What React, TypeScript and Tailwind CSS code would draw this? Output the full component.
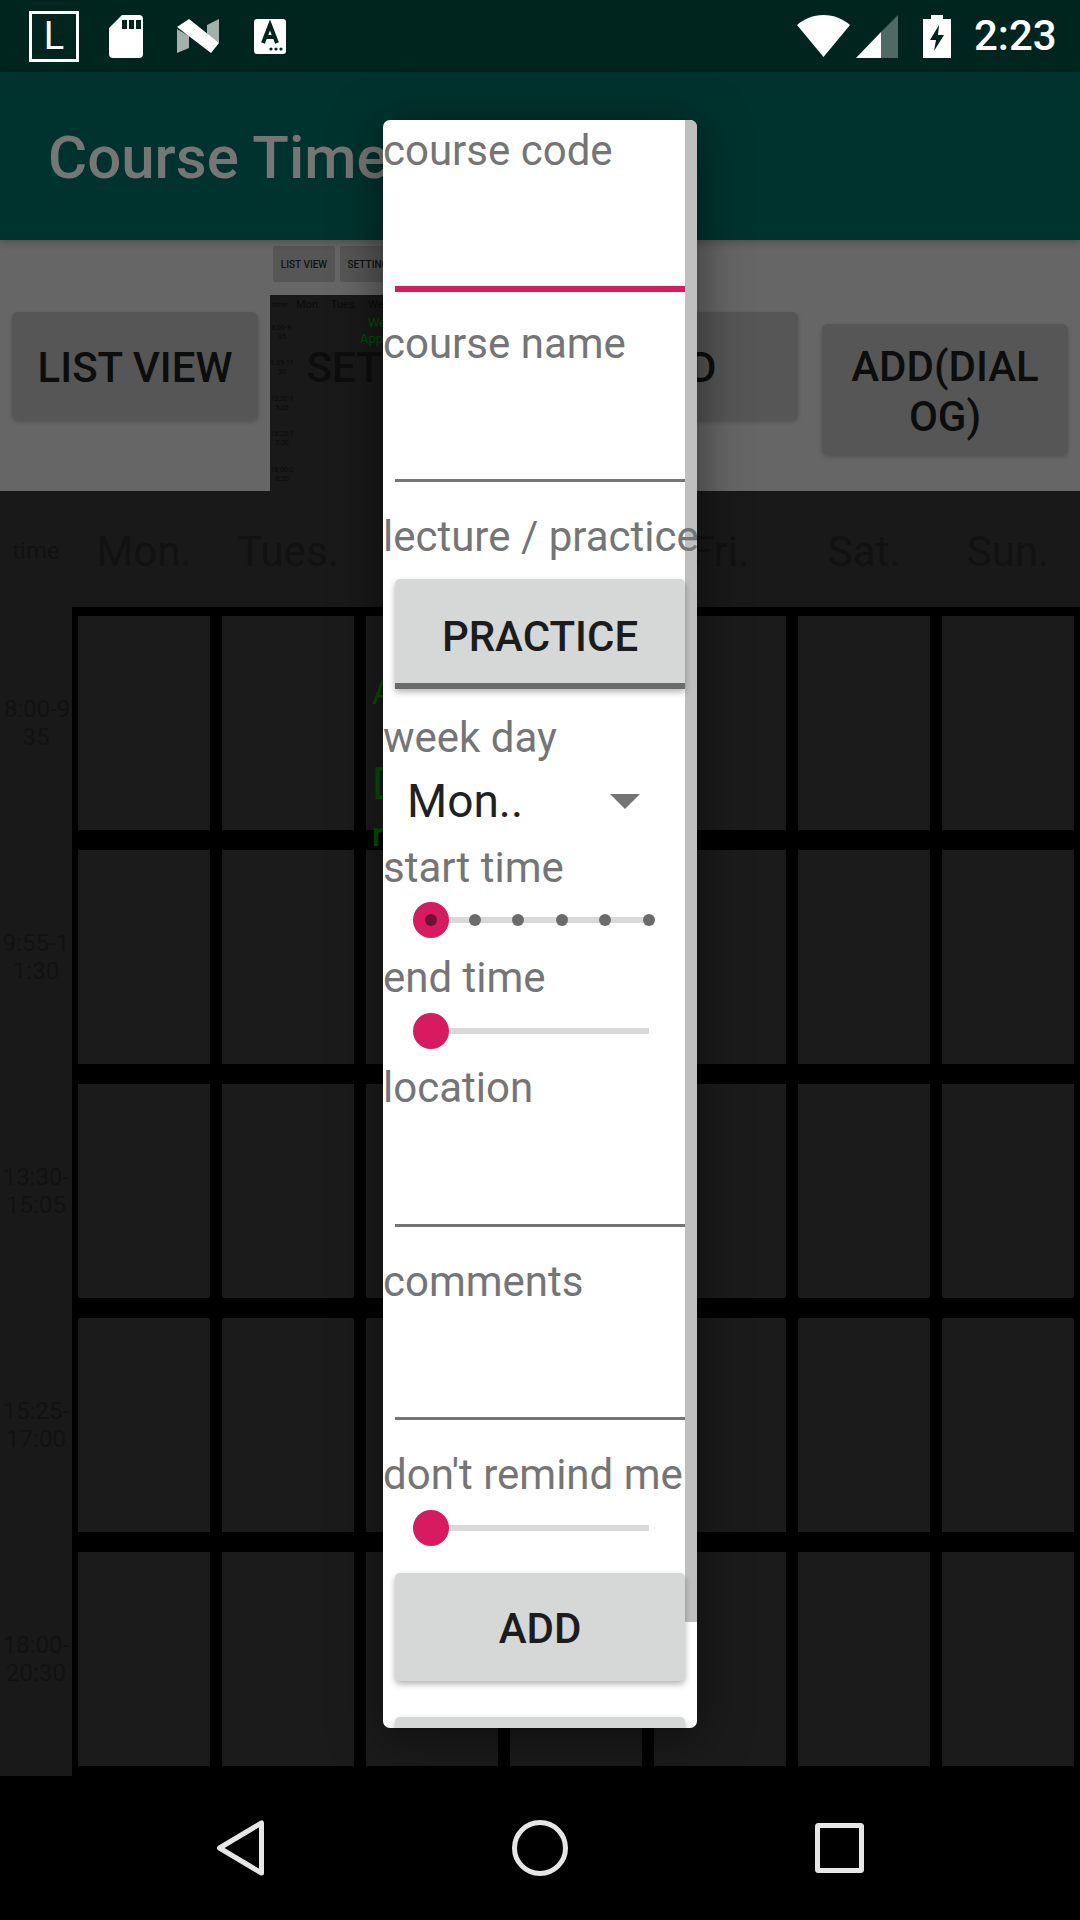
const times = [
  ['8:00-9:', '35'],
  ['9:55-1', '1:30'],
  ['13:30-', '15:05'],
  ['15:25-', '17:00'],
  ['18:00-', '20:30'],
];
const miniTimes = [
  ['8:00-9:', '35'],
  ['9:55-11', '30'],
  ['13:30-1', '5:05'],
  ['15:25-1', '7:00'],
  ['18:00-2', '0:30'],
];
const days = ['Mon.', 'Tues.', 'Wed.', 'Thur.', 'Fri.', 'Sat.', 'Sun.'];

function StatusBar() {
  return (
    <div className="h-[72px] bg-[#00251f] flex items-center text-white shrink-0">
      <div className="ml-[29px] w-[50px] h-[51px] border-[3px] border-white flex items-center justify-center text-[38px] leading-none">L</div>
      <svg className="ml-[30px]" width="34" height="43" viewBox="0 0 34 43">
        <path fill="#fff" fillRule="evenodd" d="M13 0h17a4 4 0 0 1 4 4v35a4 4 0 0 1-4 4H4a4 4 0 0 1-4-4V13zM13 5v9h5V5zM20 5v9h5V5zM27 5v9h5V5z" />
      </svg>
      <svg className="ml-[34px]" width="42" height="34" viewBox="0 0 42 34">
        <path fill="#a5b0ad" d="M0 10l12 7v12L0 34zM42 0v24l-12-7V6z" />
        <path fill="#fff" d="M12 0l30 24-8 10L0 8z" />
      </svg>
      <svg className="ml-[35px]" width="32" height="35" viewBox="0 0 32 35">
        <rect width="32" height="35" rx="3" fill="#fff" />
        <path fill="none" stroke="#00251f" strokeWidth="4" d="M9 24L16 6l7 18M11 18h10" />
        <circle cx="17" cy="30" r="1.6" fill="#00251f" />
        <circle cx="22" cy="30" r="1.6" fill="#00251f" />
        <circle cx="27" cy="30" r="1.6" fill="#00251f" />
      </svg>
      <svg className="ml-[511px]" width="53" height="42" viewBox="0 0 53 42">
        <path fill="#fff" d="M26.5 42L0 10C7 4 16 0 26.5 0S46 4 53 10z" />
      </svg>
      <svg className="ml-[6px]" width="42" height="43" viewBox="0 0 42 43">
        <path fill="#4f6a64" d="M42 0v43H25V17z" />
        <path fill="#fff" d="M25 17v26H0z" />
      </svg>
      <svg className="ml-[25px]" width="28" height="43" viewBox="0 0 28 43">
        <path fill="#fff" fillRule="evenodd" d="M8 0h12v4h8v39H0V4h8zM16 10L7 25h6l-2 11 10-16h-6z" />
      </svg>
      <div className="ml-[23px] text-[42px] leading-none font-medium">2:23</div>
    </div>
  );
}

function MiniPreview() {
  return (
    <>
      <div className="absolute left-[273px] top-[6px] flex gap-[5px] z-0">
        <div className="w-[62px] h-[36px] bg-[#565656] rounded-[2px] flex items-center justify-center text-[10px] font-medium text-[#111] whitespace-nowrap">LIST VIEW</div>
        <div className="w-[62px] h-[36px] bg-[#565656] rounded-[2px] flex items-center justify-center text-[10px] font-medium text-[#111] whitespace-nowrap">SETTINGS</div>
      </div>
      <div className="absolute left-[270px] top-[55px] w-[300px] h-[196px] bg-[#191919] z-0 text-[#0b0b0b] overflow-hidden">
        <div className="flex items-center h-[20px] text-[11px] pl-[2px]">
          <span className="w-[24px] text-[8px]">time</span>
          <span className="w-[35px]">Mon.</span>
          <span className="w-[37px]">Tues.</span>
          <span>Wed.</span>
        </div>
        <div className="absolute left-[98px] top-[20px] text-[13px] leading-[16px] text-[#004d00]">Wel</div>
        <div className="absolute left-[90px] top-[36px] text-[13px] leading-[16px] text-[#004d00]">Applic</div>
        <div className="w-[24px] flex flex-col items-center">
          {miniTimes.map((t) => (
            <div key={t[0]} className="h-[35.5px] flex flex-col justify-center text-center text-[7px] leading-[9px] whitespace-nowrap">
              <span>{t[0]}</span>
              <span>{t[1]}</span>
            </div>
          ))}
        </div>
      </div>
    </>
  );
}

function ButtonStrip() {
  const btn = 'relative z-10 shrink-0 w-[246px] rounded-[6px] flex items-center justify-center text-center text-[42px] leading-[50px] font-medium text-[#0d0d0d]';
  return (
    <div className="relative h-[251px] bg-[#666666] flex items-start gap-[24px] pl-[12px] shrink-0">
      <MiniPreview />
      <div className={`${btn} mt-[72px] h-[108px] pt-[4px] bg-[#565656] shadow-[0_2px_4px_rgba(0,0,0,0.2)]`}>LIST VIEW</div>
      <div className={`${btn} mt-[72px] h-[108px] pt-[4px]`}>SETTINGS</div>
      <div className={`${btn} mt-[72px] h-[108px] pt-[4px] bg-[#565656] shadow-[0_2px_4px_rgba(0,0,0,0.2)]`}>ADD</div>
      <div className={`${btn} mt-[84px] h-[131px] pt-[5px] bg-[#565656] shadow-[0_2px_4px_rgba(0,0,0,0.2)]`}>
        ADD(DIAL<br />OG)
      </div>
    </div>
  );
}

function Timetable() {
  return (
    <div className="h-[1285px] bg-[#191919] shrink-0 overflow-hidden">
      <div className="h-[116px] flex items-start pt-[39px] text-[#121212]">
        <div className="w-[72px] text-center text-[24px] leading-[42px]">time</div>
        <div className="grid grid-cols-[repeat(7,132px)] gap-x-[12px] px-[6px] text-[42px] leading-[44px]">
          {days.map((d) => (
            <div key={d} className="text-center whitespace-nowrap">{d}</div>
          ))}
        </div>
      </div>
      <div className="flex h-[1169px]">
        <div className="w-[72px] overflow-hidden grid grid-cols-[72px] grid-rows-[repeat(5,214.4px)] gap-y-[19.5px] pt-[9px] pb-[10px] text-[#121212] text-[24px] leading-[28px]">
          {times.map((t, i) => (
            <div key={t[0]} className="flex flex-col items-center justify-center whitespace-nowrap">
              <span className={i === 0 ? 'ml-[8px]' : ''}>{t[0]}</span>
              <span>{t[1]}</span>
            </div>
          ))}
        </div>
        <div className="flex-1 bg-black grid grid-cols-[repeat(7,132px)] grid-rows-[repeat(5,214.4px)] gap-x-[12px] gap-y-[19.5px] px-[6px] pt-[9px] pb-[10px]">
          {Array.from({ length: 35 }).map((_, i) => (
            <div key={i} className="bg-[#1b1b1b] text-[#005400]">
              {i === 2 && (
                <div className="pl-[6px] pt-[56px]">
                  <div className="text-[34px] leading-[40px] h-[92px]">A</div>
                  <div className="text-[44px] leading-[40px] h-[50px]">D</div>
                  <div className="text-[34px] leading-[40px] font-medium">r</div>
                </div>
              )}
            </div>
          ))}
        </div>
      </div>
    </div>
  );
}

function NavBar() {
  return (
    <div className="h-[144px] bg-black flex items-start justify-center gap-[240px] pt-[44px] shrink-0">
      <svg width="60" height="56" viewBox="0 0 60 56" fill="none" stroke="#e6e6e6" strokeWidth="5" strokeLinejoin="round">
        <path d="M51.5 3v50L9.5 28z" />
      </svg>
      <svg width="60" height="56" viewBox="0 0 60 56" fill="none" stroke="#e6e6e6" strokeWidth="5">
        <circle cx="30" cy="28" r="25.5" />
      </svg>
      <svg width="60" height="56" viewBox="0 0 60 56" fill="none" stroke="#e6e6e6" strokeWidth="5" strokeLinejoin="round">
        <rect x="7.5" y="5.5" width="44" height="45" rx="1" />
      </svg>
    </div>
  );
}

function Label({ children, leading = 'leading-[62px]' }: { children: string; leading?: string }) {
  return <div className={`h-[47px] text-[42px] text-[#757575] whitespace-nowrap ${leading}`}>{children}</div>;
}

function Slider({ ticks, top }: { ticks?: boolean; top: string }) {
  return (
    <div className={`${top} pl-[48px]`}>
      <div className="relative w-[218px] h-[6px] bg-[#d9d9d9]">
        <div className="absolute -left-[18px] -top-[15px] w-[36px] h-[36px] rounded-full bg-[#d81b60]" />
        {ticks && (
          <div className="absolute -left-[6px] -right-[6px] -top-[3px] flex justify-between">
            {[0, 1, 2, 3, 4, 5].map((i) => (
              <div key={i} className={`w-[12px] h-[12px] rounded-full ${i === 0 ? 'bg-[#6b1237]' : 'bg-[#6b6b6b]'}`} />
            ))}
          </div>
        )}
      </div>
    </div>
  );
}

function TextLine({ className }: { className: string }) {
  return <div className={`mx-[12px] border-b-[3px] border-[#757575] ${className}`} />;
}

function GrayButton({ children, className }: { children?: string; className: string }) {
  return (
    <div className={`mx-[12px] rounded-[5px] bg-[#d6d7d7] flex items-center justify-center text-[42px] pt-[3px] font-medium text-[#1c1c1c] shadow-[0_3px_6px_rgba(0,0,0,0.3)] ${className}`}>
      {children}
    </div>
  );
}

function CourseDialog() {
  return (
    <div className="absolute left-[383px] top-[120px] w-[314px] h-[1608px] bg-white rounded-[7px] overflow-hidden shadow-[0_8px_50px_rgba(0,0,0,0.5)] z-20">
      <div className="absolute right-0 top-0 w-[12px] h-[1502px] bg-[#bfbfbf]" />
      <div className="relative">
        <Label>course code</Label>
        <div className="mx-[12px] h-[125px] border-b-[6px] border-[#d81b60] mb-[21px]" />
        <Label>course name</Label>
        <TextLine className="h-[122px] mb-[24px]" />
        <Label>lecture / practice</Label>
        <div className="mx-[12px] mt-[26px] mb-[15px] h-[110px] pt-[10px] rounded-t-[5px] bg-[#d6d7d7] border-b-[6px] border-[#6b6b6b] flex items-center justify-center text-[42px] font-medium text-[#1c1c1c] shadow-[0_3px_6px_rgba(0,0,0,0.3)]">
          PRACTICE
        </div>
        <Label leading="leading-[68px]">week day</Label>
        <div className="h-[84px] flex items-start pl-[24px] pt-[22px]">
          <span className="text-[46px] leading-[56px] text-[#212121] w-[203px]">Mon..</span>
          <svg className="mt-[21px]" width="30" height="15" viewBox="0 0 30 15">
            <path fill="#757575" d="M0 0h30L15 15z" />
          </svg>
        </div>
        <Label leading="leading-[65px]">start time</Label>
        <div className="h-[64px]"><Slider ticks top="pt-[35px]" /></div>
        <Label leading="leading-[64px]">end time</Label>
        <div className="h-[63px]"><Slider top="pt-[35px]" /></div>
        <Label leading="leading-[64px]">location</Label>
        <TextLine className="h-[124px] mb-[22px]" />
        <Label leading="leading-[66px]">comments</Label>
        <TextLine className="h-[124px] mb-[21px]" />
        <Label leading="leading-[68px]">don't remind me</Label>
        <div className="h-[85px]"><Slider top="pt-[37px]" /></div>
        <GrayButton className="h-[108px] mb-[36px]">ADD</GrayButton>
        <GrayButton className="h-[108px]" />
      </div>
    </div>
  );
}

export default function App() {
  return (
    <div className="relative w-[1080px] h-[1920px] overflow-hidden flex flex-col font-['Roboto',sans-serif]">
      <StatusBar />
      <div className="relative z-10 h-[168px] bg-[#00332e] flex items-center pl-[48px] pt-[4px] text-[60px] font-medium text-[#767676] whitespace-nowrap shrink-0 shadow-[0_2px_8px_rgba(0,0,0,0.25)]">
        Course Timetable
      </div>
      <ButtonStrip />
      <Timetable />
      <NavBar />
      <CourseDialog />
    </div>
  );
}
